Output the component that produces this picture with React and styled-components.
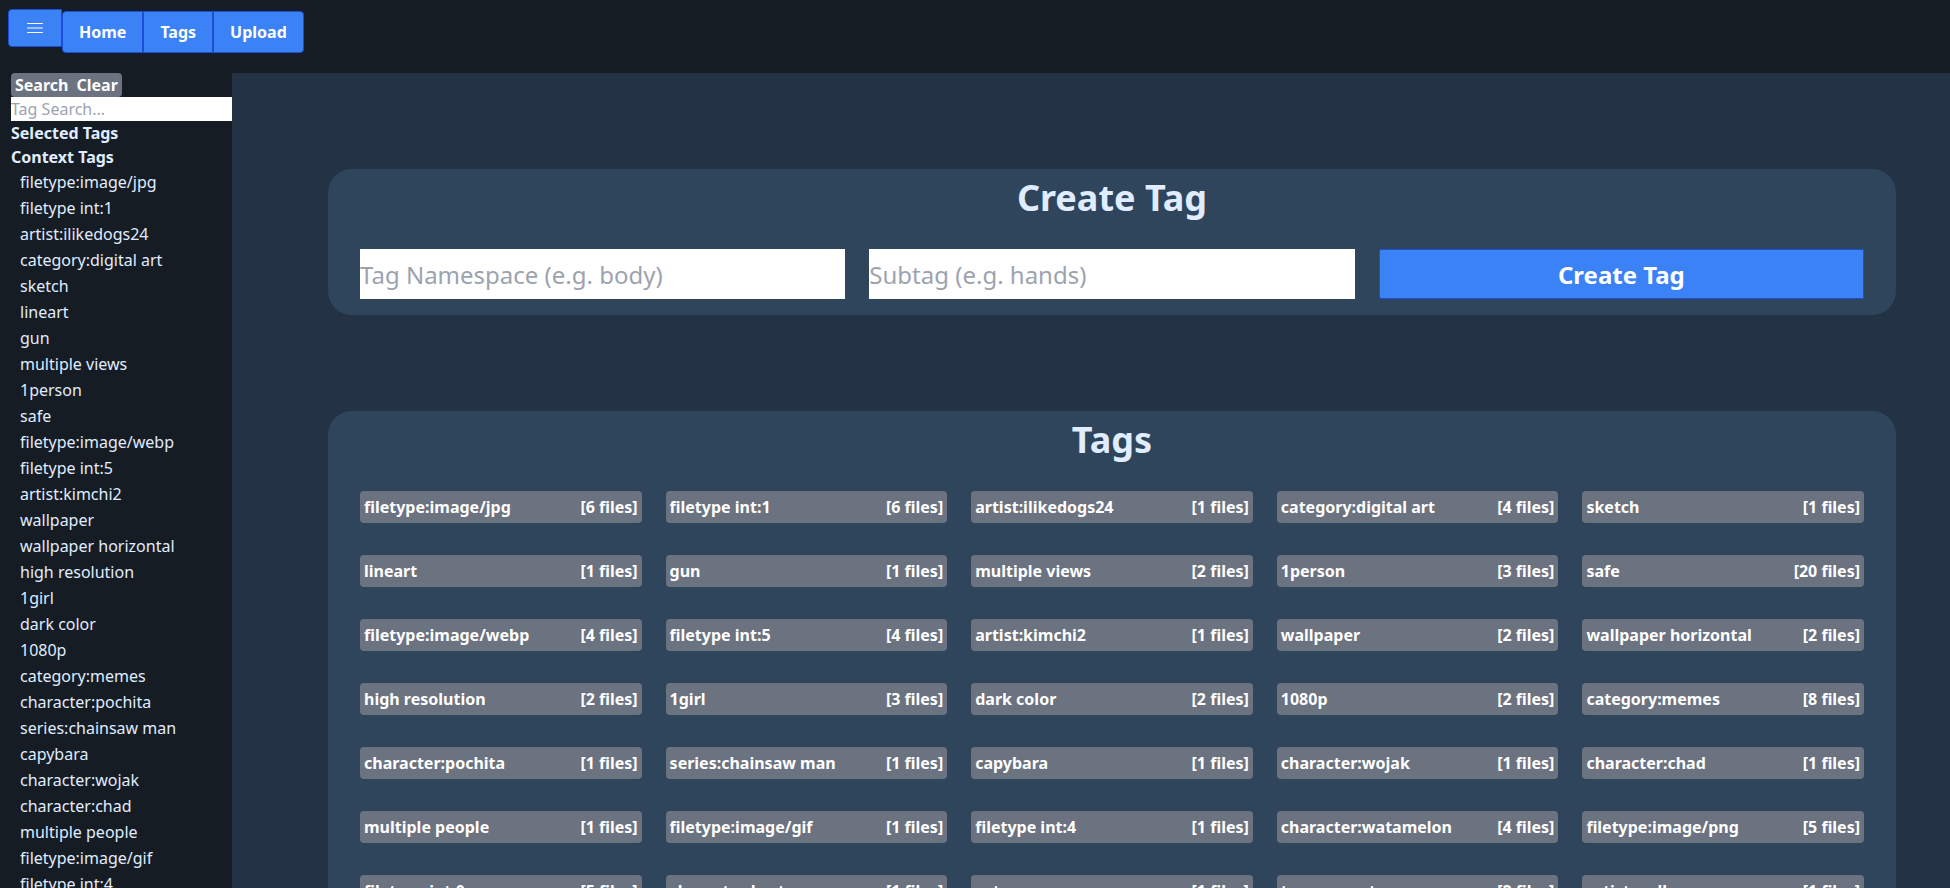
import React from "react";
import styled, { createGlobalStyle } from "styled-components";

const GlobalStyle = createGlobalStyle`
  *, *::before, *::after { box-sizing: border-box; }
  body {
    margin: 0;
    background: #233345;
    color: #e0ecff;
    font-family: "Noto Sans", sans-serif;
    font-size: 16px;
    line-height: 24px;
  }
  h1, h2, ul { margin: 0; padding: 0; }
  ul { list-style: none; }
  a { color: inherit; text-decoration: none; }
  button, input { font: inherit; margin: 0; }
  button { cursor: pointer; }
`;

const Page = styled.div`
  display: flex;
  flex-direction: column;
  height: 100vh;
  overflow: hidden;
`;

const Header = styled.header`
  display: flex;
  align-items: flex-start;
  flex: none;
  padding: 9px 8px 20px;
  background: #151c24;
`;

const MenuButton = styled.button`
  display: flex;
  padding: 8px 16px;
  border: 1px solid #1d4ed8;
  border-radius: 4px 0 0 4px;
  background: #3b82f6;
  color: #fff;
`;

const Nav = styled.nav`
  display: flex;
  margin-top: 2px;
`;

const NavLink = styled.a`
  padding: 8px 16px;
  border: 1px solid #1d4ed8;
  background: #3b82f6;
  color: #fff;
  font-weight: 700;

  &:first-child { border-radius: 4px 0 0 4px; }
  &:last-child { border-radius: 0 4px 4px 0; }
`;

const Body = styled.div`
  display: flex;
  flex: 1;
  min-height: 0;
`;

const Sidebar = styled.aside`
  flex: none;
  width: 232px;
  padding-left: 11px;
  overflow-y: auto;
  scrollbar-width: none;
  background: #151c24;
`;

const SearchActions = styled.div`
  display: flex;
  width: fit-content;
  border-radius: 4px;
  background: #6b7280;
`;

const SearchAction = styled.button`
  padding: 0 4px;
  border: 0;
  background: none;
  color: #fff;
  font-weight: 700;
`;

const TextInput = styled.input`
  display: block;
  width: 100%;
  min-width: 0;
  padding: 0;
  border: 0;
  border-radius: 0;
  background: #fff;
  color: #111827;
  font-size: ${(p) => (p.$large ? "24px" : "16px")};
  line-height: ${(p) => (p.$large ? "32px" : "24px")};
  height: ${(p) => (p.$large ? "50px" : "24px")};

  &::placeholder { color: #9ca3af; opacity: 1; }
`;

const SidebarHeading = styled.h2`
  font-size: 16px;
  line-height: 24px;
  font-weight: 700;
`;

const ContextItem = styled.li`
  padding: 1px 9px;
  line-height: 24px;
  white-space: nowrap;
`;

const Main = styled.main`
  display: flex;
  flex: 1;
  flex-direction: column;
  gap: 96px;
  min-width: 0;
  padding: 96px 54px 96px 96px;
  overflow-y: auto;
  scrollbar-width: none;
`;

const Panel = styled.section`
  padding: 8px 32px 16px;
  border-radius: 24px;
  background: #2f455b;
`;

const PanelTitle = styled.h1`
  margin-bottom: 30px;
  font-size: 36px;
  line-height: 42px;
  font-weight: 700;
  text-align: center;
`;

const CreateForm = styled.form`
  display: grid;
  grid-template-columns: repeat(3, minmax(0, 1fr));
  gap: 24px;
`;

const CreateButton = styled.button`
  padding: 9px 16px 7px;
  border: 1px solid #1d4ed8;
  border-radius: 2px 0 0 2px;
  background: #3b82f6;
  color: #fff;
  font-size: 24px;
  line-height: 32px;
  font-weight: 700;
`;

const TagGrid = styled.ul`
  display: grid;
  grid-template-columns: repeat(5, minmax(0, 1fr));
  gap: 32px 24px;
`;

const TagLink = styled.a`
  display: flex;
  justify-content: space-between;
  padding: 4px;
  border-radius: 4px;
  background: #6b7280;
  color: #fff;
  font-weight: 700;
  white-space: nowrap;
`;

const tags = [
  ["filetype:image/jpg", 6],
  ["filetype int:1", 6],
  ["artist:ilikedogs24", 1],
  ["category:digital art", 4],
  ["sketch", 1],
  ["lineart", 1],
  ["gun", 1],
  ["multiple views", 2],
  ["1person", 3],
  ["safe", 20],
  ["filetype:image/webp", 4],
  ["filetype int:5", 4],
  ["artist:kimchi2", 1],
  ["wallpaper", 2],
  ["wallpaper horizontal", 2],
  ["high resolution", 2],
  ["1girl", 3],
  ["dark color", 2],
  ["1080p", 2],
  ["category:memes", 8],
  ["character:pochita", 1],
  ["series:chainsaw man", 1],
  ["capybara", 1],
  ["character:wojak", 1],
  ["character:chad", 1],
  ["multiple people", 1],
  ["filetype:image/gif", 1],
  ["filetype int:4", 1],
  ["character:watamelon", 4],
  ["filetype:image/png", 5],
  ["filetype int:0", 5],
  ["character:kurt", 1],
  ["cat", 1],
  ["transparent", 2],
  ["artist:wallu", 1],
];

const MenuIcon = () => (
  <svg width="20" height="20" viewBox="0 0 20 20" stroke="currentColor" strokeWidth="1.2" strokeLinecap="round" aria-hidden="true">
    <path d="M2.6 5.5h14.8M2.6 10h14.8M2.6 14.5h14.8" />
  </svg>
);

export default function App() {
  return (
    <Page>
      <GlobalStyle />
      <Header>
        <MenuButton type="button" aria-label="Toggle sidebar">
          <MenuIcon />
        </MenuButton>
        <Nav>
          <NavLink href="#home">Home</NavLink>
          <NavLink href="#tags">Tags</NavLink>
          <NavLink href="#upload">Upload</NavLink>
        </Nav>
      </Header>
      <Body>
        <Sidebar>
          <SearchActions>
            <SearchAction type="button">Search</SearchAction>
            <SearchAction type="button">Clear</SearchAction>
          </SearchActions>
          <TextInput type="text" aria-label="Tag search" placeholder="Tag Search..." />
          <SidebarHeading>Selected Tags</SidebarHeading>
          <SidebarHeading>Context Tags</SidebarHeading>
          <ul>
            {tags.map(([name]) => (
              <ContextItem key={name}>
                <a href="#tag">{name}</a>
              </ContextItem>
            ))}
          </ul>
        </Sidebar>
        <Main>
          <Panel>
            <PanelTitle>Create Tag</PanelTitle>
            <CreateForm>
              <TextInput $large type="text" aria-label="Tag namespace" placeholder="Tag Namespace (e.g. body)" />
              <TextInput $large type="text" aria-label="Subtag" placeholder="Subtag (e.g. hands)" />
              <CreateButton type="button">Create Tag</CreateButton>
            </CreateForm>
          </Panel>
          <Panel>
            <PanelTitle>Tags</PanelTitle>
            <TagGrid>
              {tags.map(([name, count]) => (
                <li key={name}>
                  <TagLink href="#tag">
                    <span>{name}</span>
                    <span>{`[${count} files]`}</span>
                  </TagLink>
                </li>
              ))}
            </TagGrid>
          </Panel>
        </Main>
      </Body>
    </Page>
  );
}
